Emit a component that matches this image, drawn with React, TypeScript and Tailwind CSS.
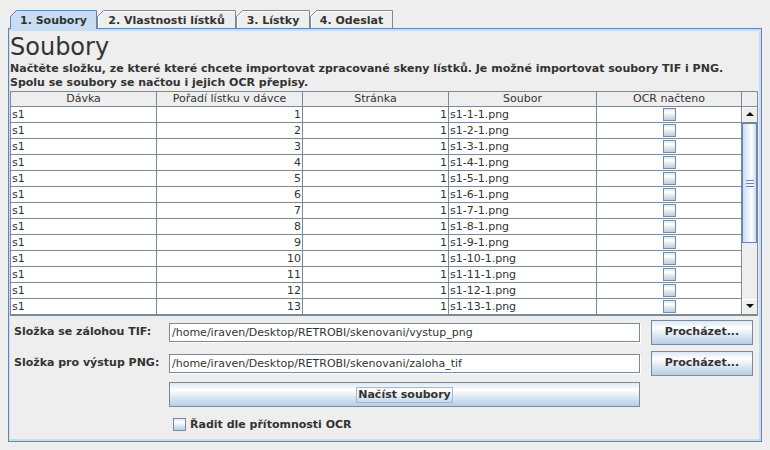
import React from "react"

// Metal/Ocean look: gradients and colours taken from the Swing defaults
const BTN_GRAD = "bg-[linear-gradient(to_bottom,#dde8f3_0%,#ffffff_30%,#dde8f3_60%,#b8cfe5_100%)]"

const rows = Array.from({ length: 13 }, (_, i) => i + 1)

function Tab({ label, w, cls, selected }: { label: string; w: number; cls: string; selected?: boolean }) {
  const bottom = selected ? 19 : 18.5
  return (
    <div className={`relative h-[19px] ${cls} ${selected ? "z-10" : ""}`}>
      <svg className="absolute inset-0" width={w} height={19}>
        <path
          d={`M0.5 ${bottom} V6.5 L6.5 0.5 H${w - 0.5} V${bottom}`}
          fill={selected ? "#c8ddf2" : "#eeeeee"}
          stroke={selected ? "#6382bf" : "#7a8a99"}
        />
        {!selected && <path d={`M1.5 ${bottom} V7 L7 1.5 H${w - 1.5}`} fill="none" stroke="#ffffff" />}
      </svg>
      <div className="relative pt-[2px] text-center text-[11px] font-bold leading-[17px] text-[#333333]">{label}</div>
    </div>
  )
}

function CheckBox() {
  return <div className={`h-[13px] w-[13px] border border-[#7a8a99] ${BTN_GRAD}`} />
}

function Arrow({ up }: { up?: boolean }) {
  return (
    <div className="flex h-[16px] items-center justify-center border-b border-[#7a8a99] bg-[#eeeeee] shadow-[inset_1px_1px_0_#ffffff]">
      <svg width="8" height="5" viewBox="0 0 8 5">
        <polygon points={up ? "0,4 4,0 8,4" : "0,0 8,0 4,4"} fill="#111111" />
      </svg>
    </div>
  )
}

function MetalButton({ children, cls }: { children: React.ReactNode; cls: string }) {
  return (
    <div className={`flex h-[25px] items-center justify-center border border-[#7a8a99] text-[11px] font-bold text-[#333333] ${BTN_GRAD} ${cls}`}>
      {children}
    </div>
  )
}

function Field({ value }: { value: string }) {
  return (
    <div className="h-[19px] w-[471px] self-center border border-[#7a8a99] bg-white pl-[2px] text-[11px] leading-[17px] text-[#333333] shadow-[1px_1px_0_#ffffff]">
      {value}
    </div>
  )
}

export default function App() {
  const headers = ["Dávka", "Pořadí lístku v dávce", "Stránka", "Soubor", "OCR načteno"]
  return (
    <div className="h-[450px] w-[770px] overflow-hidden bg-[#eeeeee] pt-[10px] font-['DejaVu_Sans',sans-serif] text-[#333333]">
      {/* tabs */}
      <div className="flex pl-[10px]">
        <Tab label="1. Soubory" w={87} cls="w-[87px]" selected />
        <Tab label="2. Vlastnosti lístků" w={139} cls="w-[139px]" />
        <Tab label="3. Lístky" w={74} cls="w-[74px]" />
        <Tab label="4. Odeslat" w={83} cls="w-[83px]" />
      </div>

      {/* tab content */}
      <div className="relative -mt-px ml-[8px] h-[414px] w-[754px] border border-[#6382bf] bg-[#eeeeee]">
        <div className="flex h-full flex-col border-b-2 border-l border-r-2 border-t-2 border-[#c8ddf2]">
          <div className="mt-[2px] h-[28px] text-[24px] leading-[28px]">Soubory</div>
          <div className="mt-[1px] text-[11px] font-bold leading-[14px]">
            <div>Načtěte složku, ze které které chcete importovat zpracované skeny lístků. Je možné importovat soubory TIF i PNG.</div>
            <div>Spolu se soubory se načtou i jejich OCR přepisy.</div>
          </div>

          {/* table in scroll pane */}
          <div className="mt-[1px] flex h-[225px] w-[748px] border border-[#7a8a99] bg-white">
            <div className="w-[731px]">
              <div className="grid grid-cols-[146px_146px_146px_148px_145px] bg-[#eeeeee]">
                {headers.map((h) => (
                  <div key={h} className="h-[15px] border-b border-r border-[#7a8a99] text-center text-[11px] leading-[14px]">
                    {h}
                  </div>
                ))}
              </div>
              {rows.map((n) => (
                <div key={n} className="grid h-[16px] grid-cols-[146px_146px_146px_148px_145px] text-[11px] leading-[15px]">
                  <div className="border-b border-r border-[#7a8a99] pl-[1px]">s1</div>
                  <div className="border-b border-r border-[#7a8a99] pr-[1px] text-right">{n}</div>
                  <div className="border-b border-r border-[#7a8a99] pr-[1px] text-right">1</div>
                  <div className="border-b border-r border-[#7a8a99] pl-[1px]">{`s1-${n}-1.png`}</div>
                  <div className="flex items-center justify-center border-b border-r border-[#7a8a99]">
                    <CheckBox />
                  </div>
                </div>
              ))}
            </div>
            {/* vertical scrollbar */}
            <div className="flex w-[15px] flex-col bg-[#eeeeee]">
              <div className="h-[15px] border-b border-[#7a8a99]" />
              <Arrow up />
              <div className="flex h-[120px] flex-col items-center justify-center gap-[2px] border border-[#6382bf] bg-[linear-gradient(to_right,#c8ddf2_0%,#ffffff_65%,#c8ddf2_100%)]">
                <div className="h-px w-[8px] bg-[#6382bf]" />
                <div className="h-px w-[8px] bg-[#6382bf]" />
                <div className="h-px w-[8px] bg-[#6382bf]" />
              </div>
              <div className="flex-1 border-b border-[#7a8a99]" />
              <div className="-mt-px">
                <Arrow />
              </div>
            </div>
          </div>

          {/* form */}
          <div className="mt-[4px] grid grid-cols-[155px_471px_113px] grid-rows-[25px_25px_25px] gap-y-[6px] pl-[4px] text-[11px]">
            <div className="self-center font-bold">Složka se zálohou TIF:</div>
            <Field value="/home/iraven/Desktop/RETROBI/skenovani/vystup_png" />
            <MetalButton cls="ml-[11px] w-[102px]">Procházet...</MetalButton>

            <div className="self-center font-bold">Složka pro výstup PNG:</div>
            <Field value="/home/iraven/Desktop/RETROBI/skenovani/zaloha_tif" />
            <MetalButton cls="ml-[11px] w-[102px]">Procházet...</MetalButton>

            <div />
            <MetalButton cls="w-[471px]">
              <span className="border border-[#a3b8cc] px-[1px] leading-[14px]">Načíst soubory</span>
            </MetalButton>
            <div />
          </div>

          <div className="ml-[163px] mt-[11px] flex items-center gap-[4px] text-[11px] font-bold">
            <CheckBox />
            <span className="leading-[13px]">Řadit dle přítomnosti OCR</span>
          </div>
        </div>
      </div>
    </div>
  )
}
